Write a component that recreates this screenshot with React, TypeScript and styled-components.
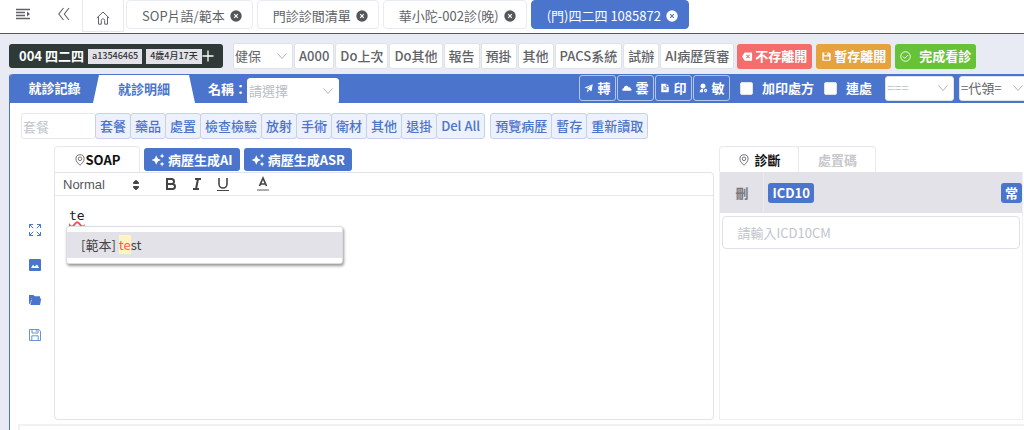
import React from "react";
import styled, { createGlobalStyle, css } from "styled-components";
import { MdAutoAwesome } from "react-icons/md";
import { RiUserSettingsFill, RiFileTextFill, RiSave3Fill, RiDeleteBack2Fill } from "react-icons/ri";

const blue = "#4b75cc";
const line = "#e8e8f0";
const grey = "#e9ebf4";

const Global = createGlobalStyle`
  * { box-sizing: border-box; }
  body {
    margin: 0;
    background: #fff;
    color: #606266;
    font: 13px/20px "Noto Sans CJK TC", "Noto Sans", sans-serif;
  }
  button, input, select { font: inherit; color: inherit; margin: 0; }
  button { cursor: pointer; }
  svg { display: block; flex: none; }
`;

const Page = styled.div`
  display: flex;
  flex-direction: column;
  min-height: 100vh;
  background: ${grey};
  overflow: hidden;
`;

/* top window tabs */
const TopBar = styled.header`
  display: flex;
  align-items: flex-start;
  height: 34px;
  background: #fff;
  border-bottom: 1px solid #55565a;
`;
const BarButton = styled.button`
  display: flex;
  align-items: center;
  justify-content: center;
  width: 41px;
  height: 28px;
  padding: 0 0 0 4px;
  border: 0;
  background: none;
`;
const HomeButton = styled.button`
  display: flex;
  align-items: center;
  justify-content: center;
  width: 42px;
  height: 32px;
  padding: 4px 0 0;
  margin-right: 2px;
  border: 1px solid ${line};
  border-top: 0;
  background: #fff;
`;
const WindowTabs = styled.nav`
  display: flex;
  gap: 4px;
`;
const WindowTab = styled.button<{ $active?: boolean }>`
  display: flex;
  align-items: center;
  gap: 5px;
  height: 29px;
  padding: 2px 10px 0 15px;
  border: 1px solid ${(p) => (p.$active ? blue : grey)};
  border-radius: 4px;
  background: ${(p) => (p.$active ? blue : "#fff")};
  color: ${(p) => (p.$active ? "#fff" : "#606266")};
  white-space: nowrap;
`;

/* patient row */
const PatientRow = styled.div`
  display: flex;
  align-items: center;
  height: 40px;
  padding: 4px 0 0 9px;
  white-space: nowrap;
`;
const Patient = styled.div`
  display: flex;
  align-items: center;
  gap: 4px;
  width: 214px;
  height: 24px;
  margin-right: 10px;
  padding: 0 8px 0 10px;
  border-radius: 3px;
  background: #2f3938;
  color: #fff;
  font-weight: 700;
`;
const Tag = styled.span`
  height: 15px;
  padding: 0 4px;
  background: #e3e2e9;
  color: #303133;
  font-size: 9px;
  font-weight: 500;
  line-height: 14px;
`;
const PlusButton = styled.button`
  display: flex;
  padding: 0;
  border: 0;
  margin-left: -4px;
  background: none;
`;
const Chips = styled.div`
  display: flex;
  gap: 1px;
  margin: 0 3px 0 1px;
`;
const Chip = styled.button`
  height: 26px;
  padding: 0 4px;
  border: 1px solid #e0e2ea;
  border-radius: 3px;
  background: #fff;
  font-weight: 500;
`;
const Leave = styled.button<{ $tone: string; $gap?: number }>`
  display: flex;
  align-items: center;
  gap: ${(p) => p.$gap ?? 2}px;
  height: 25px;
  margin-right: 4px;
  padding: 0 5px;
  border: 0;
  border-radius: 3px;
  background: ${(p) => p.$tone};
  color: #fff;
  font-weight: 700;
`;

/* drop-downs */
const SelectWrap = styled.span<{ $w: number; $tall?: boolean }>`
  display: inline-grid;
  align-items: center;
  flex: none;
  width: ${(p) => p.$w}px;
  height: ${(p) => (p.$tall ? 26 : 25)}px;
  > * { grid-area: 1 / 1; }
  > svg { justify-self: end; margin-right: 5px; pointer-events: none; }
`;
const SelectBox = styled.select<{ $faint?: boolean }>`
  appearance: none;
  width: 100%;
  height: 100%;
  padding: 0 1px;
  border: 1px solid #e0e2ea;
  border-radius: 3px;
  background: #fff;
  color: ${(p) => (p.$faint ? "#b9bcc4" : "#606266")};
`;

/* record panel */
const Panel = styled.main`
  display: flex;
  flex: 1;
  flex-direction: column;
  margin-left: 9px;
  border-left: 1px solid ${blue};
  border-radius: 3px 0 0 0;
  background: #fff;
`;
const BlueBar = styled.div`
  display: flex;
  align-items: center;
  height: 29px;
  border-radius: 3px 0 0 0;
  border-bottom: 1px solid ${blue};
  background: ${blue};
  color: #fff;
  font-weight: 700;
  white-space: nowrap;
`;
const RecordTab = styled.button<{ $active?: boolean }>`
  align-self: stretch;
  width: ${(p) => (p.$active ? 102 : 83)}px;
  margin-bottom: ${(p) => (p.$active ? -1 : 0)}px;
  padding: 0 0 0 ${(p) => (p.$active ? 0 : 6)}px;
  border: 0;
  background: ${(p) => (p.$active ? "#fff" : "none")};
  color: ${(p) => (p.$active ? blue : "#fff")};
  font-weight: 700;
  ${(p) => p.$active && css`clip-path: polygon(6px 1px, 96px 1px, 102px 100%, 0 100%);`}
`;
const NameField = styled.label`
  display: flex;
  align-items: center;
  padding: 2px 0 0 13px;
  select { font-weight: 400; border-color: #fff; }
  > span:last-child { margin-top: 4px; }
`;
const BarTools = styled.div`
  display: flex;
  align-items: center;
  flex: none;
  gap: 1px;
  margin-left: auto;
`;
const Outline = styled.button`
  display: flex;
  align-items: center;
  justify-content: center;
  gap: 3px;
  width: 37px;
  height: 26px;
  padding: 0;
  border: 1px solid #b4c5ea;
  border-radius: 3px;
  background: none;
  font-weight: 700;
`;
const Check = styled.label`
  display: flex;
  align-items: center;
  gap: 9px;
  margin-left: 9px;
  input {
    appearance: none;
    width: 13px;
    height: 13px;
    border: 1px solid #e0e2ea;
    border-radius: 2px;
    background: #fff;
  }
`;
const BarSelects = styled.div`
  display: flex;
  flex: none;
  gap: 5px;
  width: 139px;
  margin-left: 12px;
  overflow: hidden;
  font-weight: 400;
`;

/* order shortcuts */
const Shortcuts = styled.div`
  display: flex;
  padding: 10px 0 0 11px;
`;
const PackageInput = styled.input`
  width: 75px;
  height: 26px;
  padding: 0 1px;
  border: 1px solid ${line};
  border-radius: 3px;
  outline: 0;
  &::placeholder { color: #c0c4cc; }
`;
const ButtonGroup = styled.div`
  display: flex;
  margin-right: 6px;
`;
const Shortcut = styled.button`
  height: 26px;
  margin-left: -1px;
  padding: 0 4px;
  border: 1px solid #c5d2ee;
  border-radius: 3px;
  background: #edf1fa;
  color: ${blue};
  font-weight: 500;
  white-space: nowrap;
`;

/* work area */
const Work = styled.div`
  display: grid;
  grid-template-columns: 44px minmax(0, 657fr) minmax(0, 307fr);
  padding: 7px 1px 4px 0;
`;
const Rail = styled.div`
  display: flex;
  flex-direction: column;
  align-items: center;
  gap: 21px;
  padding: 77px 0 0 6px;
`;
const RailButton = styled.button`
  display: flex;
  padding: 0;
  border: 0;
  background: none;
  color: ${blue};
`;
const Column = styled.section<{ $side?: boolean }>`
  display: flex;
  flex-direction: column;
  min-height: 274px;
  margin-left: ${(p) => (p.$side ? 5 : 0)}px;
`;
const TabRow = styled.div`
  display: flex;
  align-items: flex-end;
  height: 26px;
`;
const SectionTab = styled.button<{ $w: number; $muted?: boolean; $gap?: number }>`
  display: flex;
  align-items: center;
  justify-content: center;
  gap: ${(p) => p.$gap ?? 0}px;
  width: ${(p) => p.$w}px;
  height: 26px;
  padding: 1px 0 0;
  border: 1px solid ${line};
  border-bottom: 0;
  border-radius: ${(p) => (p.$muted ? "0 4px 0 0" : "4px 4px 0 0")};
  margin-left: ${(p) => (p.$muted ? -1 : 0)}px;
  background: #fff;
  color: ${(p) => (p.$muted ? "#c8c8cc" : "#111")};
  font-weight: 700;
  svg { color: #55565a; }
`;
const Generate = styled.button`
  display: flex;
  align-items: center;
  gap: 3px;
  height: 23px;
  margin: 0 0 1px 4px;
  padding: 0 7px;
  border: 0;
  border-radius: 3px;
  background: ${blue};
  color: #fff;
  font-weight: 700;
  white-space: nowrap;
`;
const Editor = styled.div`
  flex: 1;
  border: 1px solid #e2e2ea;
  border-radius: 0 4px 4px 4px;
`;
const Toolbar = styled.div`
  display: flex;
  align-items: center;
  height: 23px;
  padding-left: 8px;
  border-bottom: 1px solid ${line};
  color: #444;
`;
const FormatButton = styled.button<{ $apart?: boolean }>`
  display: flex;
  width: 26px;
  margin-left: ${(p) => (p.$apart ? 14 : 0)}px;
  padding: 0;
  border: 0;
  background: none;
`;
const BlockFormat = styled.span`
  display: inline-grid;
  align-items: center;
  width: 99px;
  padding-top: 2px;
  font-family: "Liberation Sans", Arial, sans-serif;
  > * { grid-area: 1 / 1; }
  > svg { justify-self: end; margin-right: 17px; pointer-events: none; }
  select {
    appearance: none;
    padding: 0;
    border: 0;
    background: none;
    color: #55565a;
  }
`;
const Content = styled.div`
  position: relative;
  padding: 9px 14px;
`;
const Typed = styled.div`
  color: #222;
  font: 13px/22px "DejaVu Sans Mono", monospace;
  outline: 0;
  span { text-decoration: underline wavy #ff4d4d 2px; text-underline-offset: 1px; text-decoration-skip-ink: none; }
`;
const Suggest = styled.div`
  position: absolute;
  top: 30px;
  left: 11px;
  width: 277px;
  padding: 5px 0;
  border: 1px solid #dcdce4;
  border-radius: 3px;
  background: #fff;
  box-shadow: 1px 2px 3px #999;
`;
const Option = styled.button`
  display: block;
  width: 100%;
  height: 26px;
  padding: 0 14px;
  border: 0;
  background: #e3e2e9;
  color: #444;
  text-align: left;
  mark { background: #fff3c4; color: #fb5a4a; }
`;

const Diagnosis = styled.div`
  flex: 1;
  border: 1px solid #edeff6;
  border-top: 0;
`;
const DiagHead = styled.div`
  display: flex;
  align-items: center;
  height: 41px;
  background: #e3e2e9;
  font-weight: 700;
  span {
    display: flex;
    align-items: center;
    justify-content: center;
    align-self: stretch;
    width: 44px;
    border-right: 1px solid #ebebf1;
    color: #77777c;
  }
`;
const Code = styled.button<{ $end?: boolean }>`
  height: 20px;
  margin-left: ${(p) => (p.$end ? "auto" : "4px")};
  padding: 0 4px;
  border: 0;
  border-radius: 3px;
  background: ${blue};
  color: #fff;
  font-weight: 700;
`;
const CodeInput = styled.input`
  display: block;
  width: calc(100% - 4px);
  height: 33px;
  margin: 3px 2px;
  padding: 0 14px;
  border: 1px solid #dfe0ea;
  border-radius: 4px;
  outline: 0;
  &::placeholder { color: #c0c4cc; }
`;
const LowerBox = styled.section`
  flex: 1;
  min-height: 4px;
  margin-left: 8px;
  border: 2px solid #f1f1f3;
  border-width: 2px 0 0 2px;
`;

const Stroke = ({ size, box = 24, w = 2, children }: { size: number; box?: number; w?: number; children: React.ReactNode }) => (
  <svg width={size} height={size} viewBox={`0 0 ${box} ${box}`} fill="none" stroke="currentColor" strokeWidth={w} aria-hidden="true">
    {children}
  </svg>
);
const Chevron = () => (
  <Stroke size={12} box={12} w={1}><path d="M1.5 3.5 6 8.5l4.5-5" stroke="#b0b3ba" /></Stroke>
);
const Close = ({ active }: { active?: boolean }) => (
  <svg width="12" height="12" viewBox="0 0 12 12" aria-hidden="true">
    <circle cx="6" cy="6" r="5.7" fill={active ? "#fff" : "#55565a"} />
    <path d="m4.2 4.2 3.6 3.6m0-3.6L4.2 7.8" stroke={active ? blue : "#fff"} strokeWidth="1.1" />
  </svg>
);
const Pin = () => (
  <Stroke size={12} box={12} w={0.8}>
    <path d="M6 11.3C3.5 9 1.9 7.2 1.9 4.8a4.1 4.1 0 0 1 8.2 0C10.1 7.2 8.5 9 6 11.3Z" />
    <circle cx="6" cy="4.8" r="1.8" />
  </Stroke>
);

const windows = ["SOP片語/範本", "門診診間清單", "華小陀-002診(晚)", "(門)四二四 1085872"];
const chips = ["A000", "Do上次", "Do其他", "報告", "預掛", "其他", "PACS系統", "試辦", "AI病歷質審"];
const orders = ["套餐", "藥品", "處置", "檢查檢驗", "放射", "手術", "衛材", "其他", "退掛", "Del All"];
const drafts = ["預覽病歷", "暫存", "重新讀取"];

const Dropdown = ({ text, w, faint, tall, label }: { text: string; w: number; faint?: boolean; tall?: boolean; label: string }) => (
  <SelectWrap $w={w} $tall={tall}>
    <SelectBox $faint={faint} aria-label={label}><option>{text}</option></SelectBox>
    <Chevron />
  </SelectWrap>
);

export default function App() {
  return (
    <Page>
      <Global />
      <TopBar>
        <BarButton aria-label="選單">
          <Stroke size={16} box={16} w={1.3}>
            <path d="M1 3.5h14M1 6.5h9M1 9.5h9M1 12.5h14" />
            <path d="m12 5.6 3 2.4-3 2.4Z" fill="currentColor" stroke="none" />
          </Stroke>
        </BarButton>
        <BarButton aria-label="返回">
          <Stroke size={14} box={14} w={1.1}><path d="M6.5 1 1.8 7l4.7 6M12 1 7.3 7l4.7 6" /></Stroke>
        </BarButton>
        <HomeButton aria-label="首頁">
          <Stroke size={14} box={14} w={1}><path d="M.8 7 7 1l6.2 6M2.5 5.8v7.4h2.8V9.4c0-2 3.4-2 3.4 0v3.8h2.8V5.8" /></Stroke>
        </HomeButton>
        <WindowTabs>
          {windows.map((name, i) => (
            <WindowTab key={name} $active={i === 3}>{name}<Close active={i === 3} /></WindowTab>
          ))}
        </WindowTabs>
      </TopBar>

      <PatientRow>
        <Patient>
          004 四二四
          <Tag>a13546465</Tag>
          <Tag>4歲4月17天</Tag>
          <PlusButton aria-label="新增"><Stroke size={12} box={12} w={1.3}><path d="M6 .5v11M.5 6h11" /></Stroke></PlusButton>
        </Patient>
        <Dropdown text="健保" w={60} tall label="身分" />
        <Chips>{chips.map((c) => <Chip key={c}>{c}</Chip>)}</Chips>
        <Leave $tone="#f56c6c"><RiDeleteBack2Fill size={11} />不存離開</Leave>
        <Leave $tone="#e6a23c"><RiSave3Fill size={11} />暫存離開</Leave>
        <Leave $tone="#67c23a" $gap={8}>
          <Stroke size={11} box={12} w={1}><circle cx="6" cy="6" r="5.2" /><path d="m3.3 6 2 2 3.5-3.6" /></Stroke>完成看診
        </Leave>
      </PatientRow>

      <Panel>
        <BlueBar>
          <RecordTab>就診記錄</RecordTab>
          <RecordTab $active>就診明細</RecordTab>
          <NameField>名稱：<Dropdown text="請選擇" w={92} faint tall label="名稱" /></NameField>
          <BarTools>
            <Outline>
              <svg width="10" height="10" viewBox="0 0 1024 1024" fill="currentColor" aria-hidden="true"><path d="m64 448 832-320-128 704-446-243L832 192 243 545zm256 512V657l192 111z" /></svg>轉
            </Outline>
            <Outline>
              <svg width="10" height="10" viewBox="0 0 10 10" fill="currentColor" aria-hidden="true"><path d="M1.2 7.8C-.4 7.2.3 5.2 1.8 5.3 2 2.5 5.7 2 6.5 4.4c2-.4 2.2.9 2.2 1.4 1.3.2 1.2 2 0 2Z" /></svg>雲
            </Outline>
            <Outline><RiFileTextFill size={10} />印</Outline>
            <Outline><RiUserSettingsFill size={10} />敏</Outline>
            <Check><input type="checkbox" />加印處方</Check>
            <Check><input type="checkbox" />連處</Check>
            <BarSelects>
              <Dropdown text="===" w={69} faint label="處方類別" />
              <Dropdown text="=代領=" w={70} label="代領" />
            </BarSelects>
          </BarTools>
        </BlueBar>

        <Shortcuts>
          <PackageInput placeholder="套餐" aria-label="套餐" />
          <ButtonGroup>{orders.map((o) => <Shortcut key={o}>{o}</Shortcut>)}</ButtonGroup>
          <ButtonGroup>{drafts.map((o) => <Shortcut key={o}>{o}</Shortcut>)}</ButtonGroup>
        </Shortcuts>

        <Work>
          <Rail>
            <RailButton aria-label="全螢幕">
              <Stroke size={14} box={14} w={1}>
                <path d="M1.5 5V1.5H5M1.5 1.5l3.7 3.7M9 1.5h3.5V5M12.5 1.5 8.8 5.2M1.5 9v3.5H5M1.5 12.5l3.7-3.7M9 12.5h3.5V9M12.5 12.5 8.8 8.8" />
              </Stroke>
            </RailButton>
            <RailButton aria-label="圖片">
              <svg width="14" height="14" viewBox="0 0 14 14" aria-hidden="true">
                <rect x="1" y="1" width="12" height="12" rx="1" fill={blue} />
                <path d="m3 10 2-3.2 1.7 1.6L9 6.5l2.2 3.5Z" fill="#fff" />
              </svg>
            </RailButton>
            <RailButton aria-label="資料夾">
              <svg width="14" height="14" viewBox="0 0 14 14" fill={blue} aria-hidden="true">
                <path d="M1 2h4.5l1.2 1.3H12V5H3.6L2.2 10.5 1 11Z" />
                <path d="M4 5.5h9.2L12 12H2.3Z" /><path d="M3.6 4.8h8.6V7H3Z" />
              </svg>
            </RailButton>
            <RailButton aria-label="儲存">
              <Stroke size={14} box={14} w={0.8}>
                <path d="M1.5 1.5h9.3l1.7 1.7v9.3h-11ZM4 1.5V5h6V1.5M8.3 2.2v1.6M3.8 12.5V7.8h6.4v4.7" />
              </Stroke>
            </RailButton>
          </Rail>

          <Column>
            <TabRow>
              <SectionTab $w={86}><Pin />SOAP</SectionTab>
              <Generate><MdAutoAwesome size={14} />病歷生成AI</Generate>
              <Generate><MdAutoAwesome size={14} />病歷生成ASR</Generate>
            </TabRow>
            <Editor>
              <Toolbar>
                <BlockFormat>
                  <select aria-label="段落格式"><option>Normal</option></select>
                  <svg width="18" height="18" viewBox="0 0 18 18" fill="#444" stroke="#444" strokeWidth="2" strokeLinejoin="round" aria-hidden="true">
                    <path d="m7 11 2 2 2-2ZM7 7l2-2 2 2Z" />
                  </svg>
                </BlockFormat>
                <FormatButton aria-label="粗體">
                  <Stroke size={18} box={18}><path d="M5 4h4.5a2.5 2.5 0 0 1 0 5H5ZM5 9h5.5a2.5 2.5 0 0 1 0 5H5Z" /></Stroke>
                </FormatButton>
                <FormatButton aria-label="斜體">
                  <Stroke size={18} box={18}><path d="M7 4h6M5 14h6M8 14l2-10" /></Stroke>
                </FormatButton>
                <FormatButton aria-label="底線">
                  <Stroke size={18} box={18} w={1.6}><path d="M5 3v6a4 4 0 0 0 8 0V3" /><path d="M3 15.5h12" strokeWidth="1" /></Stroke>
                </FormatButton>
                <FormatButton $apart aria-label="文字顏色">
                  <Stroke size={18} box={18}><path d="M5.5 11 9 3l3.5 8M11.6 9H6.4" strokeWidth="1.7" /><path d="M3 15h12" strokeWidth="1.4" stroke="#888" /></Stroke>
                </FormatButton>
              </Toolbar>
              <Content>
                <Typed role="textbox" aria-label="SOAP" contentEditable suppressContentEditableWarning spellCheck={false}><span>te</span></Typed>
                <Suggest><Option>[範本] <mark>te</mark>st</Option></Suggest>
              </Content>
            </Editor>
          </Column>

          <Column $side>
            <TabRow>
              <SectionTab $w={80} $gap={4}><Pin />診斷</SectionTab>
              <SectionTab $w={78} $muted>處置碼</SectionTab>
            </TabRow>
            <Diagnosis>
              <DiagHead><span>刪</span><Code>ICD10</Code><Code $end>常</Code></DiagHead>
              <CodeInput placeholder="請輸入ICD10CM" aria-label="ICD10CM" />
            </Diagnosis>
          </Column>
        </Work>
        <LowerBox />
      </Panel>
    </Page>
  );
}
